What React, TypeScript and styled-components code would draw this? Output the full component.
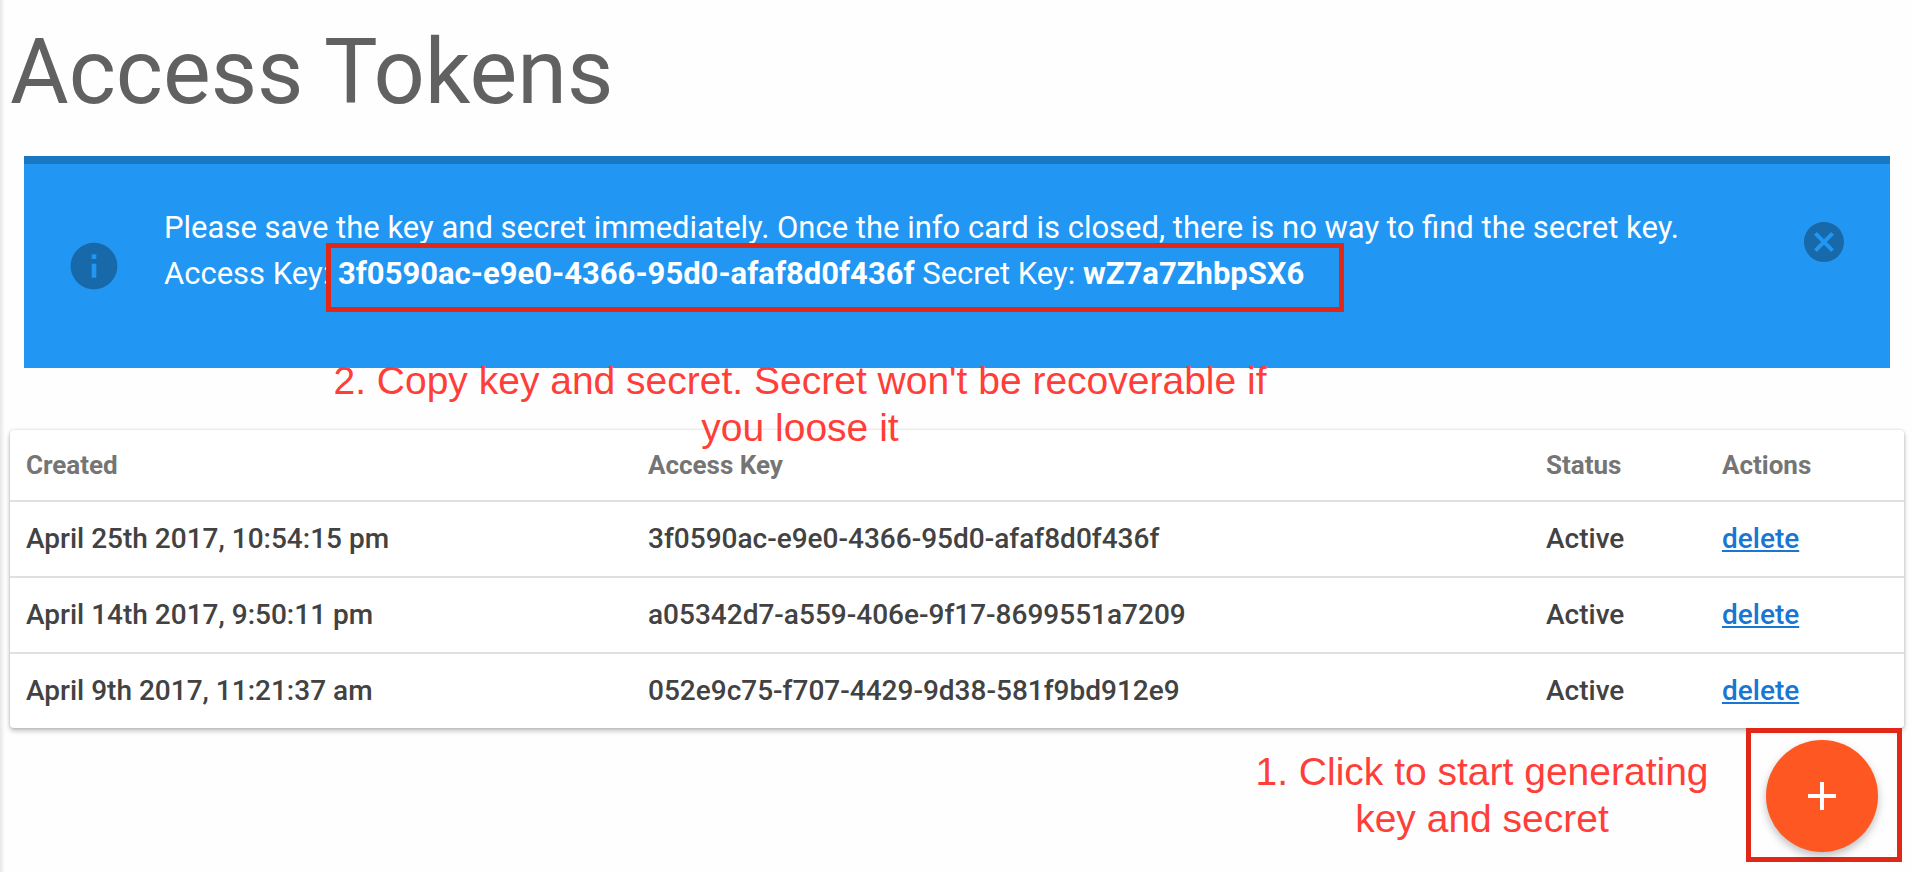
import React, { useState } from "react";
import styled, { createGlobalStyle } from "styled-components";

const GlobalStyle = createGlobalStyle`
  *, *::before, *::after { box-sizing: border-box; }
  body {
    margin: 0;
    background: #fefefe;
    color: #424242;
    font-family: Roboto, "Liberation Sans", sans-serif;
  }
`;

const Page = styled.main`
  position: relative;
  min-height: 100vh;
  padding: 19px 8px 10px 10px;
  background: linear-gradient(to right, rgba(0, 0, 0, 0.09), transparent 5px);
`;

const Title = styled.h1`
  margin: 0 0 29px;
  font-size: 90px;
  line-height: 108px;
  font-weight: 400;
  color: #616161;
`;

const Banner = styled.section`
  position: relative;
  display: flex;
  align-items: center;
  margin: 0 14px 62px;
  padding: 41px 42px 71px;
  border-top: 8px solid #1a78c2;
  background: #2196f3;
  color: #ffffff;
`;

const InfoMark = styled.span`
  display: flex;
  margin: 30px 42px 0 0;
  color: #1769aa;
`;

const Message = styled.p`
  flex: 1;
  margin: 0;
  font-size: 31px;
  line-height: 46px;
`;

const Credentials = styled.span`
  position: relative;
`;

const CloseButton = styled.button`
  display: flex;
  align-self: flex-start;
  margin: 13px 0 0;
  padding: 0;
  border: 0;
  background: none;
  color: #1769aa;
  cursor: pointer;
`;

const Highlight = styled.span`
  position: absolute;
  inset: -12px -40px -20px -12px;
  border: 5px solid #e12717;
  pointer-events: none;
`;

const Note = styled.p`
  margin: 0;
  font-family: "Liberation Sans", Arial, sans-serif;
  font-size: 39px;
  line-height: 47px;
  text-align: center;
  color: #ff3e39;
`;

const CopyNote = styled(Note)`
  position: absolute;
  z-index: 1;
  top: 100%;
  left: 300px;
  width: 952px;
  margin-top: -11px;
`;

const Table = styled.table`
  width: 100%;
  border-spacing: 0;
  table-layout: fixed;
  border-radius: 4px;
  background: #ffffff;
  box-shadow: 0 3px 5px rgba(0, 0, 0, 0.24), 0 0 3px rgba(0, 0, 0, 0.16);
`;

const HeadCell = styled.th<{ $width: string }>`
  width: ${({ $width }) => $width};
  padding: 20px 16px;
  font-size: 26px;
  line-height: 30px;
  font-weight: 700;
  text-align: left;
  color: #757575;
`;

const Cell = styled.td`
  padding: 20px 16px;
  border-top: 2px solid #e0e0e0;
  font-size: 28px;
  line-height: 34px;
  font-weight: 500;
`;

const DeleteLink = styled.a`
  color: #1976d2;
  text-decoration: underline;
`;

const Footer = styled.footer`
  display: flex;
  justify-content: flex-end;
  align-items: center;
  gap: 32px;
  padding-right: 2px;
`;

const ClickNote = styled(Note)`
  width: 464px;
`;

const AddFrame = styled.div`
  padding: 7px 19px 5px 15px;
  border: 5px solid #e12717;
`;

const AddButton = styled.button`
  display: flex;
  align-items: center;
  justify-content: center;
  width: 112px;
  height: 112px;
  padding: 0;
  border: 0;
  border-radius: 50%;
  background: #ff5722;
  color: #ffffff;
  box-shadow: 0 4px 8px rgba(0, 0, 0, 0.26);
  cursor: pointer;
`;

const InfoIcon = () => (
  <svg width="56" height="56" viewBox="0 0 24 24" fill="currentColor" aria-hidden="true">
    <path d="M12 2C6.48 2 2 6.48 2 12s4.48 10 10 10 10-4.48 10-10S17.52 2 12 2zm1 15h-2v-6h2v6zm0-8h-2V7h2v2z" />
  </svg>
);

const CancelIcon = () => (
  <svg width="48" height="48" viewBox="0 0 24 24" fill="currentColor" aria-hidden="true">
    <path d="M12 2C6.47 2 2 6.47 2 12s4.47 10 10 10 10-4.47 10-10S17.53 2 12 2zm5 13.59L15.59 17 12 13.41 8.41 17 7 15.59 10.59 12 7 8.41 8.41 7 12 10.59 15.59 7 17 8.41 13.41 12 17 15.59z" />
  </svg>
);

const PlusIcon = () => (
  <svg width="48" height="48" viewBox="0 0 24 24" fill="currentColor" aria-hidden="true">
    <path d="M19 13h-6v6h-2v-6H5v-2h6V5h2v6h6v2z" />
  </svg>
);

const initialTokens = [
  { created: "April 25th 2017, 10:54:15 pm", key: "3f0590ac-e9e0-4366-95d0-afaf8d0f436f" },
  { created: "April 14th 2017, 9:50:11 pm", key: "a05342d7-a559-406e-9f17-8699551a7209" },
  { created: "April 9th 2017, 11:21:37 am", key: "052e9c75-f707-4429-9d38-581f9bd912e9" },
];

export default function App() {
  const [tokens, setTokens] = useState(initialTokens);
  const [open, setOpen] = useState(true);

  return (
    <>
      <GlobalStyle />
      <Page>
        <Title>Access Tokens</Title>
        {open && (
          <Banner>
            <InfoMark>
              <InfoIcon />
            </InfoMark>
            <Message>
              Please save the key and secret immediately. Once the info card is closed, there is no
              way to find the secret key.
              <br />
              Access Key:{" "}
              <Credentials>
                <b>3f0590ac-e9e0-4366-95d0-afaf8d0f436f</b> Secret Key: <b>wZ7a7ZhbpSX6</b>
                <Highlight />
              </Credentials>
            </Message>
            <CloseButton type="button" aria-label="Close" onClick={() => setOpen(false)}>
              <CancelIcon />
            </CloseButton>
            <CopyNote>
              2. Copy key and secret. Secret won't be recoverable if
              <br />
              you loose it
            </CopyNote>
          </Banner>
        )}
        <Table>
          <thead>
            <tr>
              <HeadCell $width="622px">Created</HeadCell>
              <HeadCell $width="auto">Access Key</HeadCell>
              <HeadCell $width="176px">Status</HeadCell>
              <HeadCell $width="198px">Actions</HeadCell>
            </tr>
          </thead>
          <tbody>
            {tokens.map((token) => (
              <tr key={token.key}>
                <Cell>{token.created}</Cell>
                <Cell>{token.key}</Cell>
                <Cell>Active</Cell>
                <Cell>
                  <DeleteLink
                    href="#delete"
                    onClick={(event) => {
                      event.preventDefault();
                      setTokens(tokens.filter((other) => other.key !== token.key));
                    }}
                  >
                    delete
                  </DeleteLink>
                </Cell>
              </tr>
            ))}
          </tbody>
        </Table>
        <Footer>
          <ClickNote>
            1. Click to start generating
            <br />
            key and secret
          </ClickNote>
          <AddFrame>
            <AddButton type="button" aria-label="Generate access token">
              <PlusIcon />
            </AddButton>
          </AddFrame>
        </Footer>
      </Page>
    </>
  );
}
